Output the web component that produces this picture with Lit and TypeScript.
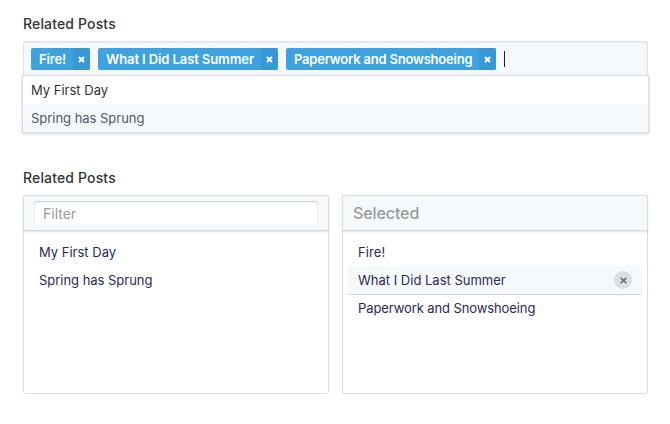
import { LitElement, html, css } from "lit";
import { customElement, property } from "lit/decorators.js";
import { classMap } from "lit/directives/class-map.js";
import { styleMap } from "lit/directives/style-map.js";

interface Post {
  title: string;
  tagTracking?: number;
  rowTracking: number;
}

@customElement("tag-chip")
class TagChip extends LitElement {
  @property() label = "";
  @property({ type: Number }) tracking = 0;

  static styles = css`
    :host {
      display: flex;
      height: 22px;
      border-radius: 2px;
      overflow: hidden;
      background: #3ea2e0;
      color: #fff;
      flex: none;
    }
    .text {
      padding: 0 7px 0 8px;
      font-size: 13px;
      font-weight: 600;
      line-height: 23px;
      white-space: nowrap;
    }
    .close {
      width: 17px;
      display: flex;
      align-items: center;
      justify-content: center;
      background: #3898d5;
    }
  `;

  render() {
    return html`
      <span class="text" style=${styleMap({ letterSpacing: `${this.tracking}px` })}>${this.label}</span>
      <span class="close">
        <svg width="7" height="7" viewBox="0 0 7 7">
          <path d="M1 1L6 6M6 1L1 6" stroke="#fff" stroke-width="2" />
        </svg>
      </span>
    `;
  }
}

@customElement("app-root")
class AppRoot extends LitElement {
  tags: Post[] = [
    { title: "Fire!", tagTracking: -0.15, rowTracking: 0.1 },
    { title: "What I Did Last Summer", tagTracking: -0.1, rowTracking: 0 },
    { title: "Paperwork and Snowshoeing", tagTracking: -0.2, rowTracking: -0.1 },
  ];
  available: Post[] = [
    { title: "My First Day", rowTracking: 0 },
    { title: "Spring has Sprung", rowTracking: -0.03 },
  ];
  active = 1;

  static styles = css`
    :host {
      display: block;
      box-sizing: border-box;
      height: 424px;
      padding: 14px 22px 0 23px;
      background: #fff;
      font-family: Inter, "Liberation Sans", sans-serif;
      font-size: 13px;
      color: #333;
    }
    * {
      box-sizing: border-box;
    }
    .label {
      height: 27px;
      line-height: 20px;
      font-weight: 500;
      font-size: 14px;
      letter-spacing: 0.15px;
    }
    .field {
      height: 34px;
      display: flex;
      gap: 8px;
      padding: 6px 7px 0;
      background: #f5f9fc;
      border: 1px solid #e0e2e4;
      border-bottom: 0;
      border-radius: 3px 3px 0 0;
      box-shadow: inset 0 1px 1px rgba(0, 0, 0, 0.05);
    }
    .caret {
      width: 1px;
      height: 16px;
      margin-top: 3px;
      background: #222;
    }
    .dropdown {
      height: 58px;
      margin: 0 -1px 0 -1px;
      border: 1px solid #dcdedf;
      background: #fff;
      box-shadow: 0 1px 3px rgba(0, 0, 0, 0.18);
    }
    .option {
      height: 28px;
      line-height: 29px;
      padding-left: 8px;
    }
    .option.hover {
      background: #f5f9fc;
      color: #4b5b6b;
    }
    .second {
      margin-top: 35px;
    }
    .panels {
      display: grid;
      grid-template-columns: 306px 306px;
      gap: 13px;
    }
    .panel {
      height: 199px;
      border: 1px solid #dedede;
      border-radius: 2px;
    }
    .head {
      height: 36px;
      margin: -1px -1px 0;
      border: 1px solid #d9dcde;
      background: #f5f9fc;
      box-shadow: 0 1px 2px rgba(0, 0, 0, 0.12);
      border-radius: 2px 2px 0 0;
      color: #999;
    }
    .filter {
      height: 24px;
      margin: 5px 10px 0;
      padding-left: 9px;
      line-height: 25px;
      font-size: 14px;
      background: #fff;
      border-radius: 3px;
      box-shadow: inset 0 1px 2px rgba(0, 0, 0, 0.22);
    }
    .selected {
      padding-left: 10px;
      line-height: 35px;
      font-size: 16px;
      font-weight: 500;
      letter-spacing: -0.1px;
    }
    .list {
      padding: 7px 5px 0;
      color: #2c2957;
    }
    .row {
      height: 28px;
      line-height: 29px;
      padding: 0 10px;
      display: flex;
      justify-content: space-between;
      align-items: center;
    }
    .row.active {
      background: #f5f9fc;
      border-radius: 3px;
      box-shadow: 0 1px 1px rgba(0, 0, 0, 0.18);
    }
    .remove {
      width: 18px;
      height: 18px;
      border-radius: 9px;
      background: #dcdfe1;
      display: flex;
      align-items: center;
      justify-content: center;
    }
  `;

  tracking(post: Post) {
    return styleMap({ letterSpacing: `${post.rowTracking}px` });
  }

  render() {
    return html`
      <div class="label">Related Posts</div>
      <div class="field">
        ${this.tags.map((t) => html`<tag-chip .label=${t.title} .tracking=${t.tagTracking}></tag-chip>`)}
        <span class="caret"></span>
      </div>
      <div class="dropdown">
        ${this.available.map(
          (t, i) => html`<div class=${classMap({ option: true, hover: i === 1 })} style=${this.tracking(t)}>${t.title}</div>`
        )}
      </div>
      <div class="label second">Related Posts</div>
      <div class="panels">
        <div class="panel">
          <div class="head"><div class="filter">Filter</div></div>
          <div class="list">
            ${this.available.map((t) => html`<div class="row"><span style=${this.tracking(t)}>${t.title}</span></div>`)}
          </div>
        </div>
        <div class="panel">
          <div class="head selected">Selected</div>
          <div class="list">
            ${this.tags.map(
              (t, i) => html`<div class=${classMap({ row: true, active: i === this.active })}>
                <span style=${this.tracking(t)}>${t.title}</span>
                ${i === this.active
                  ? html`<span class="remove">
                      <svg width="7" height="7" viewBox="0 0 7 7">
                        <path d="M0.7 0.7L6.3 6.3M6.3 0.7L0.7 6.3" stroke="#666" stroke-width="1.6" />
                      </svg>
                    </span>`
                  : ""}
              </div>`
            )}
          </div>
        </div>
      </div>
    `;
  }
}
